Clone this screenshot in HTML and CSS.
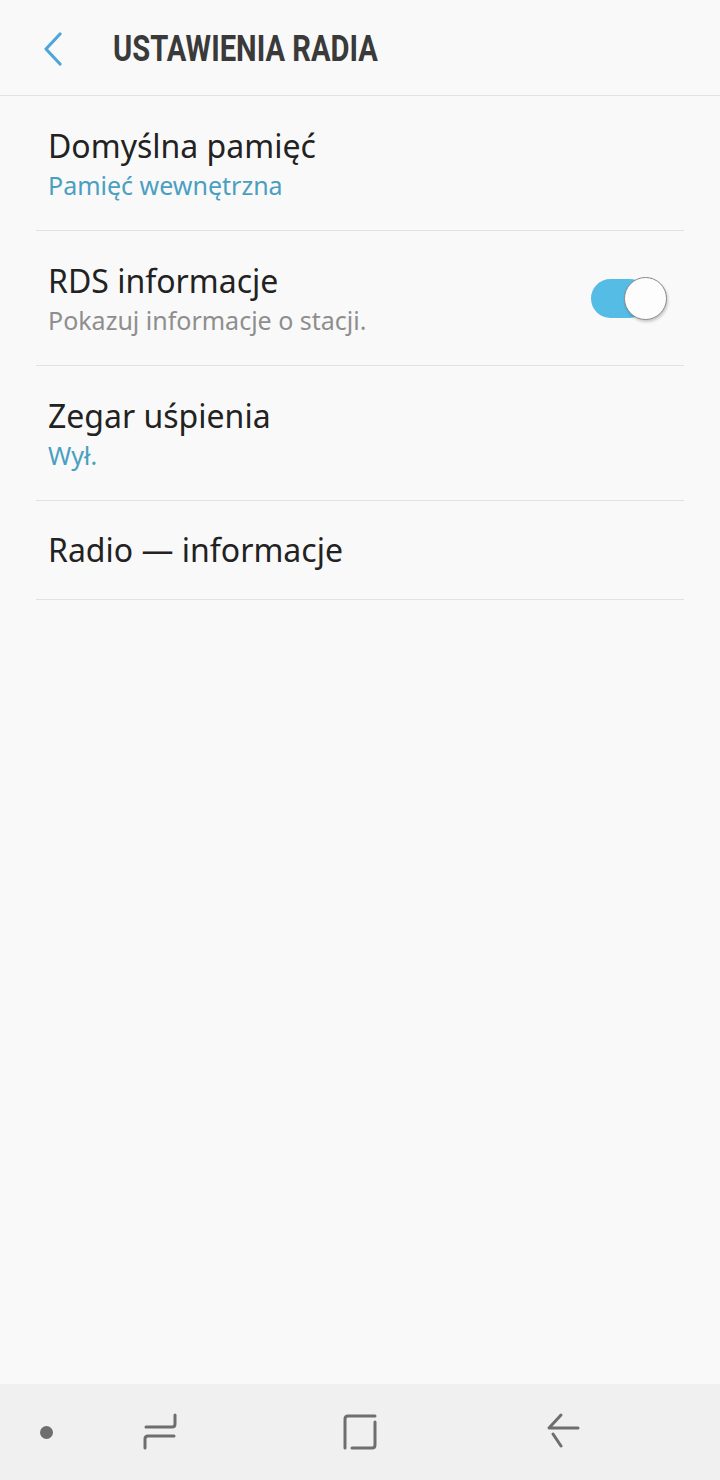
FILE: index.html
```html
<!DOCTYPE html>
<html>
<head>
  <title>Ustawienia radia</title>
  <link rel="stylesheet" href="styles.css">
</head>
<body>

  <div class="screen">
    <header class="top-bar">
      <button class="btn-back">
        <svg width="22" height="34" viewBox="0 0 22 34">
          <path d="M18 2 L4 17 L18 32" fill="none" stroke="#4ea6d9" stroke-width="3.2" stroke-linecap="round" stroke-linejoin="round"/>
        </svg>
      </button>
      <h1 class="title">USTAWIENIA RADIA</h1>
    </header>

    <div class="list">
      <div class="row">
        <div class="row-text">
          <p class="row-title">Domyślna pamięć</p>
          <p class="row-sub sub-blue">Pamięć wewnętrzna</p>
        </div>
      </div>

      <div class="row">
        <div class="row-text">
          <p class="row-title">RDS informacje</p>
          <p class="row-sub sub-gray">Pokazuj informacje o stacji.</p>
        </div>
        <div class="switch">
          <div class="switch-knob"></div>
        </div>
      </div>

      <div class="row">
        <div class="row-text">
          <p class="row-title">Zegar uśpienia</p>
          <p class="row-sub sub-blue">Wył.</p>
        </div>
      </div>

      <div class="row row-single">
        <div class="row-text">
          <p class="row-title">Radio — informacje</p>
        </div>
      </div>
    </div>

    <nav class="nav-bar">
      <span class="nav-dot"></span>
      <svg class="nav-icon" width="36" height="40" viewBox="0 0 36 40">
        <path d="M33 3 V12 Q33 15 30 15 H4" fill="none" stroke="#6e6e6e" stroke-width="3" stroke-linecap="round"/>
        <path d="M3 36 V27 Q3 24 6 24 H32" fill="none" stroke="#6e6e6e" stroke-width="3" stroke-linecap="round"/>
      </svg>
      <svg class="nav-icon" width="36" height="40" viewBox="0 0 36 40">
        <path d="M3 36 V7 Q3 4 6 4 H33" fill="none" stroke="#6e6e6e" stroke-width="3" stroke-linecap="round"/>
        <path d="M33 10 V33 Q33 36 30 36 H10" fill="none" stroke="#6e6e6e" stroke-width="3" stroke-linecap="round"/>
      </svg>
      <svg class="nav-icon" width="36" height="40" viewBox="0 0 36 40">
        <path d="M16 3 L4 16 H33" fill="none" stroke="#6e6e6e" stroke-width="3" stroke-linecap="round" stroke-linejoin="round"/>
        <path d="M8 22 L16 34" fill="none" stroke="#6e6e6e" stroke-width="3" stroke-linecap="round"/>
      </svg>
    </nav>
  </div>

</body>
</html>
```

FILE: styles.css
```css
body{
  margin: 0;
  background-color: #f9f9f9;
  font-family: "Noto Sans", Roboto, sans-serif;
  color: #222222;
}

.screen{
  width: 720px;
  height: 1480px;
  display: flex;
  flex-direction: column;
}

.top-bar{
  height: 95px;
  display: flex;
  align-items: center;
  border-bottom: 1px solid #e2e2e2;
}

.btn-back{
  background: none;
  border: none;
  padding: 0;
  margin-left: 42px;
  margin-top: 2px;
  display: flex;
}

.title{
  margin: 2px 0 0 49px;
  font-family: Roboto, sans-serif;
  font-size: 36px;
  font-weight: bold;
  color: #3a3a3a;
  transform: scaleX(0.81);
  transform-origin: left center;
  white-space: nowrap;
}

.list{
  flex: 1;
  padding: 0 36px;
}

.row{
  height: 134px;
  display: flex;
  align-items: center;
  justify-content: space-between;
  border-bottom: 1px solid #e2e2e2;
  padding: 0 12px;
}

.row-single{
  height: 98px;
}

.row-title{
  margin: 0;
  font-size: 32px;
  line-height: 38px;
}

.row-sub{
  margin: 5px 0 0 0;
  font-size: 25px;
  line-height: 30px;
}

.sub-blue{
  color: #4a9fc1;
}

.sub-gray{
  color: #8e8e8e;
}

.switch{
  width: 58px;
  height: 39px;
  border-radius: 20px;
  background-color: #55bce6;
  position: relative;
  margin-right: 23px;
}

.switch-knob{
  position: absolute;
  right: -18px;
  top: -2px;
  width: 41px;
  height: 41px;
  border-radius: 50%;
  background-color: #fdfdfd;
  border: 1px solid #8a8a8a;
  box-shadow: 1px 2px 3px rgba(0,0,0,0.2);
}

.nav-bar{
  height: 96px;
  background-color: #f0f0f0;
  display: flex;
  align-items: center;
}

.nav-dot{
  width: 13px;
  height: 13px;
  border-radius: 50%;
  background-color: #6e6e6e;
  margin-left: 40px;
}

.nav-icon{
  margin-left: 89px;
}

.nav-icon + .nav-icon{
  margin-left: 164px;
}

.nav-icon:last-child{
  margin-left: 167px;
}
```
